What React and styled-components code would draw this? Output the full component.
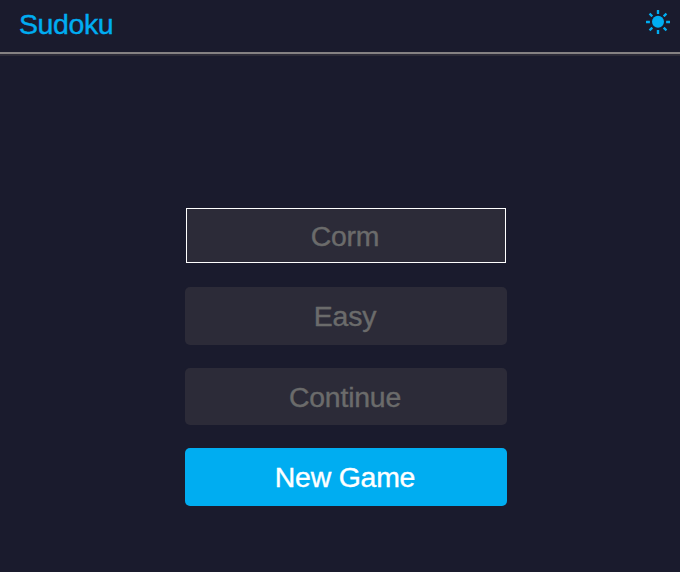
import React from "react";
import styled, { createGlobalStyle } from "styled-components";

const GlobalStyle = createGlobalStyle`
  * { box-sizing: border-box; }
  body { margin: 0; background: #1a1b2d; font-family: "Liberation Sans", Arial, sans-serif; }
`;
const Page = styled.div`
  height: 572px;
  display: flex;
  flex-direction: column;
  overflow: hidden;
`;
const Header = styled.header`
  height: 56px;
  flex: none;
  display: flex;
  justify-content: space-between;
  align-items: flex-start;
  padding: 8px 9px 0 19px;
  border-bottom: 2px solid #2c2b38;
  box-shadow: inset 0 -2px 0 #858283;
`;
const Title = styled.h1`
  margin: 0;
  font-size: 28.5px;
  line-height: 32px;
  font-weight: 400;
  letter-spacing: -0.4px;
  color: #00adf1;
  -webkit-text-stroke: 0.4px currentColor;
`;
const ThemeButton = styled.button`
  width: 26px;
  height: 26px;
  margin-top: 1px;
  padding: 0;
  border: 0;
  background: none;
  color: #00adf1;
  svg { display: block; }
`;
const Menu = styled.main`
  width: 322px;
  margin: 152px 0 0 185px;
  display: flex;
  flex-direction: column;
`;
const NameInput = styled.input`
  height: 55px;
  margin: 0 1px 24px;
  padding: 2px 2px 0 0;
  border: 1px solid #fff;
  outline: 0;
  border-radius: 0;
  background: #2c2b38;
  color: #6b6b6b;
  text-align: center;
  font: 28.4px "Liberation Sans", Arial, sans-serif;
  letter-spacing: -0.2px;
  -webkit-text-stroke: 0.4px currentColor;
`;
const MenuButton = styled.button`
  height: ${(p) => p.$height || 58}px;
  margin: 0 0 23px;
  padding: ${(p) => (p.$height ? 2 : 0)}px 2px 0 0;
  border: 0;
  border-radius: 5px;
  background: ${(p) => (p.$primary ? "#00adf1" : "#2c2b38")};
  color: ${(p) => (p.$primary ? "#fff" : "#6b6b6b")};
  font: 28.4px "Liberation Sans", Arial, sans-serif;
  letter-spacing: -0.2px;
  -webkit-text-stroke: 0.4px currentColor;
`;

const SunIcon = () => (
  <svg width="26" height="26" viewBox="0 0 26 26" fill="currentColor">
    <circle cx="13" cy="12.8" r="6" />
    {[0, 45, 90, 135, 180, 225, 270, 315].map((a) => (
      <rect key={a} x="11.8" y="1" width="2.4" height="3.9" rx="0.3" transform={`rotate(${a} 13 13)`} />
    ))}
  </svg>
);

export default function App() {
  return (
    <Page>
      <GlobalStyle />
      <Header>
        <Title>Sudoku</Title>
        <ThemeButton aria-label="Toggle theme"><SunIcon /></ThemeButton>
      </Header>
      <Menu>
        <NameInput defaultValue="Corm" aria-label="Player name" />
        <MenuButton>Easy</MenuButton>
        <MenuButton $height={57}>Continue</MenuButton>
        <MenuButton $primary>New Game</MenuButton>
      </Menu>
    </Page>
  );
}
